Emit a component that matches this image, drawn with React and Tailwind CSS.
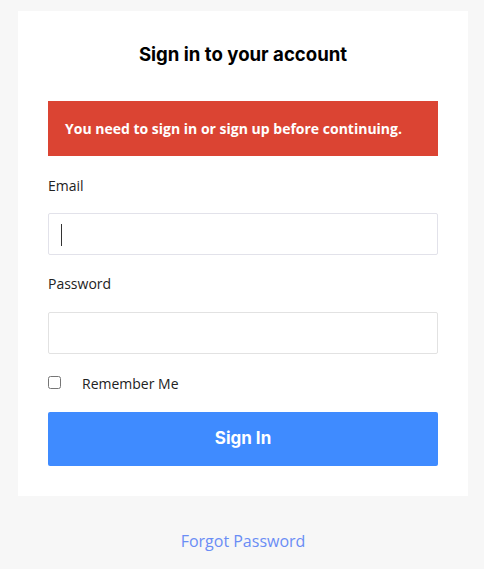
import React, { useState } from 'react';

const App = () => {
  const [form, setForm] = useState({ email: '', password: '', remember: false });

  const handleChange = (e) => {
    const { name, value, type, checked } = e.target;
    setForm({ ...form, [name]: type === 'checkbox' ? checked : value });
  };

  return (
    <div
      className="min-h-[569px] bg-[#f7f7f7] pt-[11px] pl-[18px] pr-[16px]"
      style={{ fontFamily: '"Open Sans", "Liberation Sans", sans-serif' }}
    >
      {/* Card */}
      <div className="bg-white px-[30px] pt-[31px] pb-[30px]">
        <h1
          className="text-center text-[18.6px] leading-[24px] font-bold text-black"
          style={{ fontFamily: 'Inter, "DejaVu Sans", sans-serif' }}
        >
          Sign in to your account
        </h1>

        {/* Alert */}
        <div className="mt-[35px] h-[55px] flex items-center px-[17px] bg-[#db4433] text-white text-[14px] font-bold">
          You need to sign in or sign up before continuing.
        </div>

        <form onSubmit={(e) => e.preventDefault()}>
          {/* Email */}
          <label className="block mt-[20px] text-[14px] leading-[20px] text-[#222]">Email</label>
          <div className="relative mt-[17px]">
            <input
              type="email"
              name="email"
              value={form.email}
              onChange={handleChange}
              className="block w-full h-[42px] border border-[#e2e2ea] rounded-[2px] px-[12px] text-[14px] outline-none"
            />
            <span className="absolute left-[13px] top-[11px] w-px h-[22px] bg-[#333]" />
          </div>

          {/* Password */}
          <label className="block mt-[19px] text-[14px] leading-[20px] text-[#222]">Password</label>
          <input
            type="password"
            name="password"
            value={form.password}
            onChange={handleChange}
            className="block w-full mt-[18px] h-[42px] border border-[#e2e2e2] rounded-[2px] px-[12px] text-[14px] outline-none"
          />

          {/* Remember */}
          <div className="mt-[19px] h-[20px] flex items-center">
            <input
              type="checkbox"
              name="remember"
              checked={form.remember}
              onChange={handleChange}
              className="m-0 w-[13px] h-[13px] mt-[-2px]"
            />
            <span className="ml-[21px] text-[14px] text-[#222]">Remember Me</span>
          </div>

          <button
            type="submit"
            className="mt-[19px] w-full h-[54px] rounded-[2px] bg-[#3f8bff] text-white text-[17px] font-bold"
            style={{ fontFamily: 'Inter, "DejaVu Sans", sans-serif' }}
          >
            Sign In
          </button>
        </form>
      </div>

      <div className="mt-[33px] text-center">
        <a href="#" className="text-[16px] leading-[24px] text-[#6a8df5]">
          Forgot Password
        </a>
      </div>
    </div>
  );
};

export default App;
